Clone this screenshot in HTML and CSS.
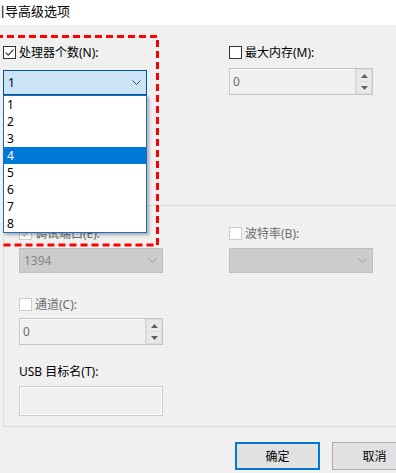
FILE: index.html
```html
<!DOCTYPE html>
<html lang="zh-CN">
<head>
<meta charset="utf-8">
<title>引导高级选项</title>
<link rel="stylesheet" href="styles.css">
</head>
<body>
<div class="dialog">
  <div class="titlebar"><span class="title">引导高级选项</span></div>

  <div class="top">
    <div class="field">
      <div class="chk-row">
        <span class="cb"><svg viewBox="0 0 11 11" width="11" height="11"><path d="M1.8 5.6 L4.3 8.1 L9.4 2.6" fill="none" stroke="#333" stroke-width="1.2"/></svg></span>
        <span>处理器个数(N):</span>
      </div>
      <div class="combo focused">
        <span class="val">1</span>
        <svg class="chev" viewBox="0 0 9 5" width="9" height="5"><path d="M0.5 0.5 L4.5 4.5 L8.5 0.5" fill="none" stroke="#444" stroke-width="1"/></svg>
      </div>
    </div>
    <div class="field">
      <div class="chk-row">
        <span class="cb"></span>
        <span>最大内存(M):</span>
      </div>
      <div class="spin top-spin">
        <span class="val">0</span>
        <div class="spin-btns">
          <span class="sb"><svg viewBox="0 0 7 4" width="7" height="4"><path d="M0 4 L3.5 0 L7 4Z" fill="#606060"/></svg></span>
          <span class="sb"><svg viewBox="0 0 7 4" width="7" height="4"><path d="M0 0 L3.5 4 L7 0Z" fill="#606060"/></svg></span>
        </div>
      </div>
    </div>
  </div>

  <div class="group">
    <div class="group-row">
      <div class="field">
        <div class="chk-row dis">
          <span class="cb dis"><svg viewBox="0 0 11 11" width="11" height="11"><path d="M1.8 5.6 L4.3 8.1 L9.4 2.6" fill="none" stroke="#bcbcbc" stroke-width="1.2"/></svg></span>
          <span>调试端口(E):</span>
        </div>
        <div class="combo disabled">
          <span class="val">1394</span>
          <svg class="chev" viewBox="0 0 9 5" width="9" height="5"><path d="M0.5 0.5 L4.5 4.5 L8.5 0.5" fill="none" stroke="#999" stroke-width="1"/></svg>
        </div>
      </div>
      <div class="field">
        <div class="chk-row dis">
          <span class="cb dis"></span>
          <span>波特率(B):</span>
        </div>
        <div class="combo disabled">
          <span class="val"></span>
          <svg class="chev" viewBox="0 0 9 5" width="9" height="5"><path d="M0.5 0.5 L4.5 4.5 L8.5 0.5" fill="none" stroke="#999" stroke-width="1"/></svg>
        </div>
      </div>
    </div>

    <div class="field channel">
      <div class="chk-row dis">
        <span class="cb dis"></span>
        <span>通道(C):</span>
      </div>
      <div class="spin group-spin">
        <span class="val">0</span>
        <div class="spin-btns">
          <span class="sb"><svg viewBox="0 0 7 4" width="7" height="4"><path d="M0 4 L3.5 0 L7 4Z" fill="#606060"/></svg></span>
          <span class="sb"><svg viewBox="0 0 7 4" width="7" height="4"><path d="M0 0 L3.5 4 L7 0Z" fill="#606060"/></svg></span>
        </div>
      </div>
    </div>

    <div class="field usb">
      <div class="label">USB 目标名(T):</div>
      <div class="textbox"></div>
    </div>
  </div>

  <div class="buttons">
    <button class="btn default" type="button">确定</button>
    <button class="btn" type="button">取消</button>
  </div>
</div>

<ul class="droplist">
  <li>1</li>
  <li>2</li>
  <li>3</li>
  <li class="sel">4</li>
  <li>5</li>
  <li>6</li>
  <li>7</li>
  <li>8</li>
</ul>

<svg class="annot" width="396" height="473" viewBox="0 0 396 473">
  <path d="M -4 36.5 H 157.5 V 245 H -4" fill="none" stroke="#ff0000" stroke-width="3" stroke-dasharray="7 4"/>
</svg>
</body>
</html>
```
FILE: styles.css
```css
* {
  box-sizing: border-box;
  margin: 0;
  padding: 0;
}

html, body {
  width: 396px;
  height: 473px;
  overflow: hidden;
}

body {
  position: relative;
  background: #f0f0f0;
  font-family: "Noto Sans", "Noto Sans CJK SC", sans-serif;
  font-size: 12px;
  color: #000;
}

.titlebar {
  height: 25px;
  background: #fff;
  display: flex;
  align-items: center;
  padding-bottom: 3px;
  overflow: hidden;
}

.title {
  font-size: 13px;
  line-height: 16px;
  margin-left: -8px;
  white-space: nowrap;
}

.top {
  height: 180px;
  display: grid;
  grid-template-columns: 144px 144px;
  column-gap: 82px;
  align-items: start;
  padding: 21px 0 0 3px;
}

.field {
  display: flex;
  flex-direction: column;
}

.chk-row {
  display: flex;
  align-items: center;
  gap: 3px;
  height: 13px;
  line-height: 13px;
  white-space: nowrap;
}

.chk-row.dis {
  color: #6d6d6d;
}

.cb {
  flex: none;
  width: 13px;
  height: 13px;
  border: 1px solid #333;
  background: #fff;
  display: flex;
  align-items: center;
  justify-content: center;
}

.cb.dis {
  border-color: #cccccc;
}

.combo {
  height: 25px;
  display: flex;
  align-items: center;
  padding: 0 5px 0 4px;
  border: 1px solid;
}

.combo .val {
  flex: 1;
  line-height: 16px;
}

.combo .chev {
  flex: none;
}

.combo.focused {
  margin-top: 11px;
  background: #cce4f7;
  border-color: #005499;
}

.combo.disabled {
  margin-top: 8px;
  background: #cccccc;
  border-color: #bfbfbf;
  color: #838383;
}

.spin {
  height: 27px;
  display: flex;
  border: 1px solid #c4c4c4;
  background: #f0f0f0;
  box-shadow: inset 1px 1px 0 #fbfbfb;
  color: #6d6d6d;
}

.spin .val {
  flex: 1;
  display: flex;
  align-items: center;
  padding-left: 3px;
}

.spin-btns {
  width: 17px;
  display: flex;
  flex-direction: column;
  border-left: 1px solid #d6d6d6;
  padding: 1px;
  gap: 1px;
  background: #dcdcdc;
}

.sb {
  flex: 1;
  display: flex;
  align-items: center;
  justify-content: center;
  background: #e9e9e9;
}

.top-spin {
  margin-top: 9px;
}

.group {
  margin-left: 3px;
  width: 430px;
  border: 1px solid #dcdcdc;
  padding: 21px 0 10px 15px;
}

.group-row {
  display: grid;
  grid-template-columns: 144px 144px;
  column-gap: 66px;
}

.channel {
  width: 144px;
  margin-top: 25px;
}

.group-spin {
  margin-top: 7px;
}

.usb {
  width: 144px;
  margin-top: 20px;
}

.label {
  height: 13px;
  line-height: 13px;
  white-space: nowrap;
}

.textbox {
  margin-top: 8px;
  height: 30px;
  border: 1px solid #cccccc;
  box-shadow: inset 1px 1px 0 #fff, inset -1px -1px 0 #fff;
  background: #f0f0f0;
}

.buttons {
  display: flex;
  gap: 12px;
  margin-top: 15px;
  padding-left: 235px;
}

.btn {
  flex: none;
  width: 85px;
  height: 28px;
  background: #e1e1e1;
  border: 1px solid #adadad;
  font-family: "Noto Sans", "Noto Sans CJK SC", sans-serif;
  font-size: 12px;
  color: #000;
}

.btn.default {
  border: 2px solid #0078d7;
}

.droplist {
  position: absolute;
  left: 3px;
  top: 95px;
  width: 144px;
  list-style: none;
  background: #fff;
  border: 1px solid #1a6fc4;
  box-shadow: 2px 2px 3px rgba(0, 0, 0, 0.3);
}

.droplist li {
  height: 17px;
  line-height: 17px;
  padding-left: 3px;
}

.droplist li.sel {
  background: #0078d7;
  color: #fff;
}

.annot {
  position: absolute;
  left: 0;
  top: 0;
  pointer-events: none;
}
```
